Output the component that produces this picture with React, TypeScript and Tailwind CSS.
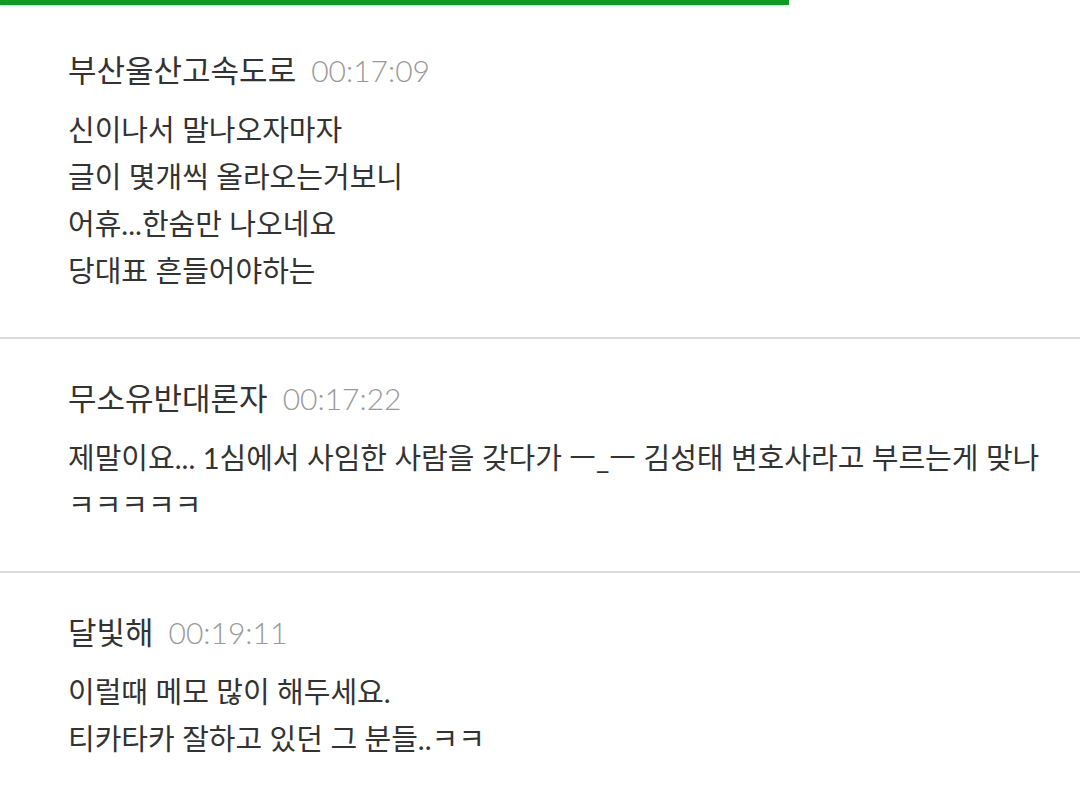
import React from 'react'

interface Comment {
	id: number;
	name: string;
	time: string;
	lines: string[];
}

const comments: Comment[] = [
	{
		id: 1,
		name: '부산울산고속도로',
		time: '00:17:09',
		lines: ['신이나서 말나오자마자', '글이 몇개씩 올라오는거보니', '어휴...한숨만 나오네요', '당대표 흔들어야하는'],
	},
	{
		id: 2,
		name: '무소유반대론자',
		time: '00:17:22',
		lines: ['제말이요... 1심에서 사임한 사람을 갖다가 ㅡ_ㅡ 김성태 변호사라고 부르는게 맞나', 'ㅋㅋㅋㅋㅋ'],
	},
	{
		id: 3,
		name: '달빛해',
		time: '00:19:11',
		lines: ['이럴때 메모 많이 해두세요.', '티카타카 잘하고 있던 그 분들..ㅋㅋ'],
	},
]

const kr = "font-['Lato','Noto_Sans_CJK_KR',sans-serif]"

function CommentItem({ comment }: { comment: Comment }) {
	return (
		<li className="px-[68px] pt-[39px] pb-[43px]">
			<div className="flex items-center h-[40px]">
				<span className={`text-[31px] text-[#333] ${kr}`}>{comment.name}</span>
				<span className="ml-[15px] text-[30px] font-light text-[#999] font-['Lato',sans-serif]">{comment.time}</span>
			</div>
			<div className={`mt-[16px] text-[29px] leading-[47px] text-[#333] ${kr}`}>
				{comment.lines.map((line, i) => (
					<p key={i} className="whitespace-nowrap">{line}</p>
				))}
			</div>
		</li>
	)
}

export default function App() {
	return (
		<div className="w-[1080px] h-[797px] bg-white overflow-hidden">
			<div className="h-[5px] w-[789px] bg-[#0f9a24] shadow-[0_1px_3px_rgba(15,154,36,0.25)]" />
			<ul className="pt-[6px]">
				{comments.map((c, i) => (
					<React.Fragment key={c.id}>
						{i > 0 && <div className="h-[2px] bg-[#dcdcdc]" />}
						<CommentItem comment={c} />
					</React.Fragment>
				))}
			</ul>
		</div>
	)
}
